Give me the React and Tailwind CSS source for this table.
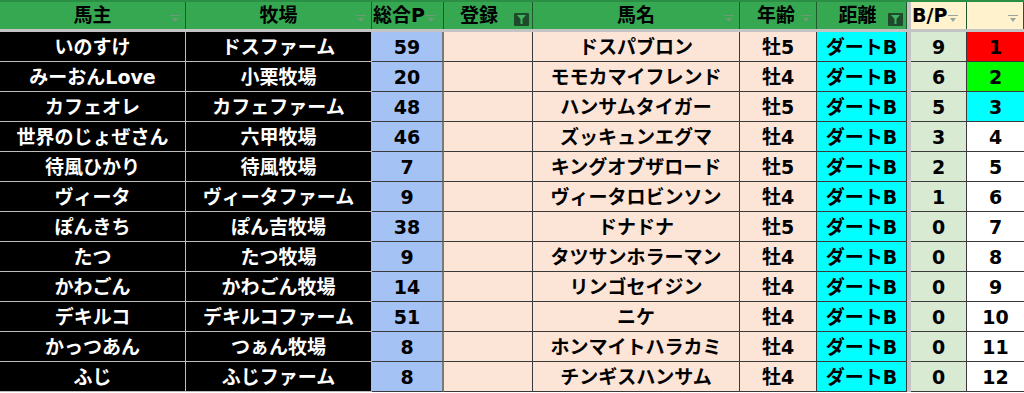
import React from 'react';

const rows = [
  ['いのすけ', 'ドスファーム', 59, 'ドスパブロン', '牡5', 9, 1],
  ['みーおんLove', '小栗牧場', 20, 'モモカマイフレンド', '牡4', 6, 2],
  ['カフェオレ', 'カフェファーム', 48, 'ハンサムタイガー', '牡5', 5, 3],
  ['世界のじょぜさん', '六甲牧場', 46, 'ズッキュンエグマ', '牡4', 3, 4],
  ['待風ひかり', '待風牧場', 7, 'キングオブザロード', '牡5', 2, 5],
  ['ヴィータ', 'ヴィータファーム', 9, 'ヴィータロビンソン', '牡4', 1, 6],
  ['ぽんきち', 'ぽん吉牧場', 38, 'ドナドナ', '牡5', 0, 7],
  ['たつ', 'たつ牧場', 9, 'タツサンホラーマン', '牡4', 0, 8],
  ['かわごん', 'かわごん牧場', 14, 'リンゴセイジン', '牡4', 0, 9],
  ['デキルコ', 'デキルコファーム', 51, 'ニケ', '牡4', 0, 10],
  ['かっつあん', 'つぁん牧場', 8, 'ホンマイトハラカミ', '牡4', 0, 11],
  ['ふじ', 'ふじファーム', 8, 'チンギスハンサム', '牡4', 0, 12],
];

const rankBg = { 1: 'bg-[#ff0000]', 2: 'bg-[#00ff00]', 3: 'bg-[#00ffff]' };

function FilterIcon({ dark }) {
  return (
    <svg width="10" height="7" viewBox="0 0 10 7" className="shrink-0">
      <g fill={dark ? '#6f9a78' : '#9aa59a'}>
        <rect x="0" y="0" width="10" height="1" />
        <polygon points="2,3 8,3 5,7" />
      </g>
    </svg>
  );
}

function ActiveFilter() {
  return (
    <div className="w-[15px] h-[13px] bg-[#1e4a2b] rounded-[1px] flex items-center justify-center">
      <svg width="9" height="9" viewBox="0 0 9 9">
        <polygon points="0,0 9,0 5.5,4 5.5,9 3.5,9 3.5,4" fill="#3cb460" />
      </svg>
    </div>
  );
}

function Head({ w, children, icon, left, bg = 'bg-[#36a852]' }) {
  return (
    <div className={`${w} ${bg} relative h-full border-r border-[#1f5a2e] flex items-center ${left ? 'justify-start pl-[1px]' : 'justify-center'}`}>
      <span className="leading-none">{children}</span>
      {icon === 'on' ? (
        <div className="absolute right-[3px] bottom-[3px]"><ActiveFilter /></div>
      ) : icon ? (
        <div className="absolute right-[5px] bottom-[7px]"><FilterIcon dark={bg === 'bg-[#36a852]'} /></div>
      ) : null}
    </div>
  );
}

export default function App() {
  return (
    <div
      className="w-[1024px] h-[393px] overflow-hidden bg-white font-bold text-[19px] text-black"
      style={{ fontFamily: '"DejaVu Sans", "Noto Sans CJK JP", sans-serif' }}
    >
      <div className="flex h-[29px] border-t-2 border-[#2a8f44]">
        <Head w="w-[186px]" icon>馬主</Head>
        <Head w="w-[186px]" icon>牧場</Head>
        <Head w="w-[72px]" left>
          <span className="flex items-end gap-[1px]">総合P<span className="mb-[3px]"><FilterIcon dark /></span></span>
        </Head>
        <Head w="w-[89px]" icon="on"><span className="pr-[18px]">登録</span></Head>
        <Head w="w-[207px]" icon>馬名</Head>
        <Head w="w-[77px]" icon><span className="pr-[4px]">年齢</span></Head>
        <Head w="w-[90px]" icon="on"><span className="pr-[8px]">距離</span></Head>
        <div className="w-[4px] h-full bg-[#c4c4c4]" />
        <Head w="w-[56px]" left bg="bg-[#fff2cc]">
          <span className="flex items-end gap-[1px]">B/P<span className="mb-[3px]"><FilterIcon /></span></span>
        </Head>
        <Head w="w-[57px]" icon bg="bg-[#fff2cc]"></Head>
      </div>
      <div className="h-[3px] bg-[#c4c4c4]" />
      {rows.map(([owner, farm, pts, horse, age, bp, rank]) => (
        <div key={rank} className="flex h-[30px]">
          <div className="w-[186px] bg-black text-white border-r border-b border-[#bdbdbd] flex items-center justify-center pt-[2px]">{owner}</div>
          <div className="w-[186px] bg-black text-white border-r border-b border-[#bdbdbd] flex items-center justify-center pt-[2px]">{farm}</div>
          <div className="w-[72px] bg-[#a4c2f4] border-r-2 border-b border-r-[#7a7a7a] border-b-[#3a3a3a] flex items-center justify-center pt-[2px]">{pts}</div>
          <div className="w-[89px] bg-[#fce4d6] border-r border-b border-[#3a3a3a]" />
          <div className="w-[207px] bg-[#fce4d6] border-r border-b border-[#3a3a3a] flex items-center justify-center pt-[2px]">{horse}</div>
          <div className="w-[77px] bg-[#fce4d6] border-r border-b border-[#3a3a3a] flex items-center justify-center pt-[2px]">{age}</div>
          <div className="w-[90px] bg-[#00ffff] border-r border-b border-[#3a3a3a] flex items-center justify-center pt-[2px]">ダートB</div>
          <div className="w-[4px] bg-[#c4c4c4]" />
          <div className="w-[56px] bg-[#d9ead3] border-r border-b border-[#3a3a3a] flex items-center justify-center pt-[2px]">{bp}</div>
          <div className={`w-[57px] ${rankBg[rank] || 'bg-white'} border-b border-[#3a3a3a] flex items-center justify-center pt-[2px]`}>{rank}</div>
        </div>
      ))}
    </div>
  );
}
